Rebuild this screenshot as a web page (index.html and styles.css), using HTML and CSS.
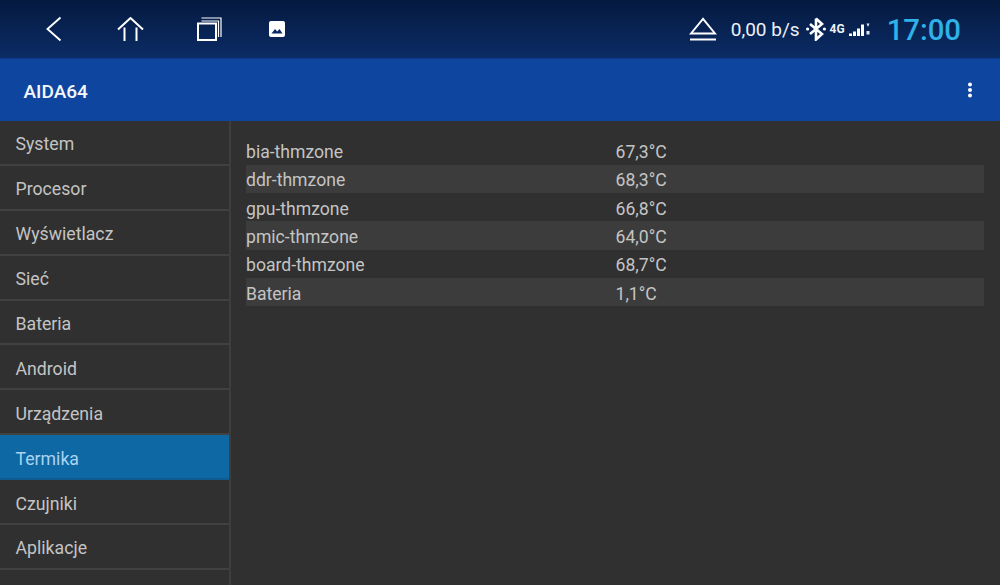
FILE: index.html
```html
<!DOCTYPE html>
<html lang="pl">
<head>
<meta charset="utf-8">
<title>AIDA64</title>
<link rel="stylesheet" href="styles.css">
</head>
<body>
<header class="status">
  <div class="nav">
    <svg class="back" width="18" height="26" viewBox="0 0 18 26"><path d="M15.500 1.500 2.500 13l13 11.500" fill="none" stroke="#fff" stroke-width="1.900"/></svg>
    <svg class="home" width="27" height="24" viewBox="0 0 27 24"><path d="M1 12.500 13.500 1 26 12.500M7.500 24V10.500M19.500 24V10.500" fill="none" stroke="#fff" stroke-width="2"/></svg>
    <svg class="recent" width="25" height="24" viewBox="0 0 25 24"><path d="M1 6.500h18V23H1z" fill="none" stroke="#fff" stroke-width="2"/><path d="M4.500 4h17V20M4.500 1h19.500v19" fill="none" stroke="#fff" stroke-width="1.200"/></svg>
    <svg class="pic" width="16" height="16" viewBox="0 0 16 16"><rect width="16" height="16" rx="2" fill="#fff"/><path d="M2.500 12.500 6 8l2.200 2.500L10.500 8l3 4.500z" fill="#0a2a63"/></svg>
  </div>
  <div class="tray">
    <svg class="eject" width="28" height="24" viewBox="0 0 28 24"><path d="M14 1.800 2 16.500h24z" fill="none" stroke="#fff" stroke-width="1.900"/><path d="M1 22.500h26" stroke="#fff" stroke-width="2"/></svg>
    <span class="speed">0,00 b/s</span>
    <svg class="bt" width="20" height="24" viewBox="0 0 20 24"><path d="M10 1.500v21l6-5.500L4 7M10 1.500 16 7 4 17" fill="none" stroke="#fff" stroke-width="2.600"/><circle cx="1.600" cy="12" r="1.600" fill="#fff"/><circle cx="18.400" cy="12" r="1.600" fill="#fff"/></svg>
    <span class="net">4G</span>
    <svg class="signal" width="21" height="16" viewBox="0 0 21 16"><path d="M0 11.500h3V14H0zM4 9.500h3V14H4zM8 6.500h3V14H8zM12 2.500h3V14h-3z" fill="#fff"/><path d="M17.500 1.500h3L19 5zM17.500 9h3v3.500h-3z" fill="#e3e8f0"/></svg>
    <time class="clock">17:00</time>
  </div>
</header>
<div class="appbar">
  <h1 class="title">AIDA64</h1>
  <svg class="more" width="6" height="16" viewBox="0 0 6 16"><circle cx="3" cy="2.500" r="2" fill="#fff"/><circle cx="3" cy="8" r="2" fill="#fff"/><circle cx="3" cy="13.500" r="2" fill="#fff"/></svg>
</div>
<main class="content">
  <nav class="side">
    <div class="item">System</div>
    <div class="item">Procesor</div>
    <div class="item">Wyświetlacz</div>
    <div class="item">Sieć</div>
    <div class="item">Bateria</div>
    <div class="item">Android</div>
    <div class="item">Urządzenia</div>
    <div class="item active">Termika</div>
    <div class="item">Czujniki</div>
    <div class="item">Aplikacje</div>
  </nav>
  <section class="rows">
    <div class="row"><span class="name">bia-thmzone</span><span>67,3°C</span></div>
    <div class="row alt"><span class="name">ddr-thmzone</span><span>68,3°C</span></div>
    <div class="row"><span class="name">gpu-thmzone</span><span>66,8°C</span></div>
    <div class="row alt"><span class="name">pmic-thmzone</span><span>64,0°C</span></div>
    <div class="row"><span class="name">board-thmzone</span><span>68,7°C</span></div>
    <div class="row alt"><span class="name">Bateria</span><span>1,1°C</span></div>
  </section>
</main>
</body>
</html>
```
FILE: styles.css
```css
* { box-sizing: border-box; }
html, body { margin: 0; height: 100%; }
body {
  width: 1000px;
  height: 585px;
  overflow: hidden;
  display: flex;
  flex-direction: column;
  background: #303030;
  font-family: Roboto, "Liberation Sans", sans-serif;
  color: #c4c4c4;
}
.status {
  height: 58px;
  flex: none;
  display: flex;
  align-items: center;
  justify-content: space-between;
  background: linear-gradient(#05193f, #0b2c66);
  padding: 0 39px 0 45px;
}
.nav { display: flex; align-items: center; }
.back { margin-right: 54px; }
.home { margin-right: 53px; }
.recent { margin-right: 47px; }
.tray { display: flex; align-items: center; color: #eef2f8; }
.eject { margin-right: 14px; }
.speed { font-size: 19px; margin-right: 6px; }
.bt { margin-right: 4px; }
.net { font-size: 12px; font-weight: 700; margin-right: 4px; }
.signal { margin-right: 17px; margin-top: 2px; }
.clock { font-size: 29.300px; font-weight: 500; color: #2fb2e8; padding-top: 1px; }
.appbar {
  height: 63px;
  flex: none;
  display: flex;
  align-items: center;
  justify-content: space-between;
  background: #0e459e;
  border-top: 1px solid #0b3c8c;
  padding: 0 27px 0 23.500px;
}
.title { margin: 0; padding-top: 2px; font-size: 19px; font-weight: 500; color: #f4f7fb; }
.more { display: block; }
.content { flex: 1; display: flex; min-height: 0; }
.side {
  width: 231px;
  flex: none;
  border-right: 2px solid #3e3e3e;
}
.item {
  height: 44.900px;
  display: flex;
  align-items: center;
  padding: 4px 0 0 15.500px;
  font-size: 17.700px;
  border-bottom: 2px solid #414141;
}
.item.active { background: #0e68a4; color: #a9d3f0; border-bottom-color: #0e5c90; }
.rows { flex: 1; padding: 15.500px 16px 0 15px; }
.row {
  height: 28.300px;
  display: flex;
  align-items: center;
  padding-top: 3px;
  font-size: 17.600px;
}
.row.alt { background: #3c3c3c; }
.name { width: 369.500px; flex: none; }
```
